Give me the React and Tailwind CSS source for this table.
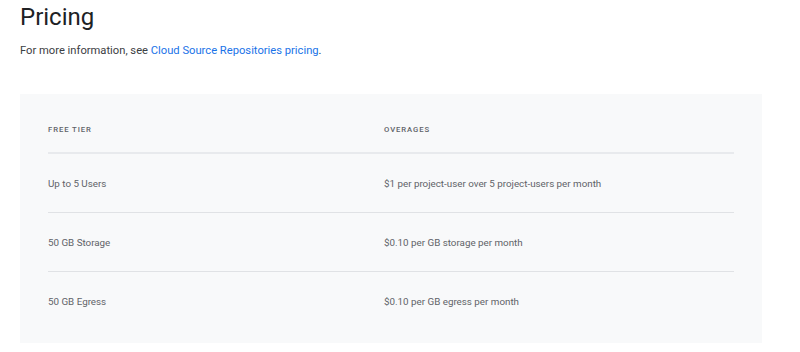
import React from "react";

const rows = [
  ["Up to 5 Users", "$1 per project-user over 5 project-users per month"],
  ["50 GB Storage", "$0.10 per GB storage per month"],
  ["50 GB Egress", "$0.10 per GB egress per month"],
];

export default function App() {
  return (
    <div
      className="w-[800px] h-[352px] bg-white px-5 overflow-hidden"
      style={{ fontFamily: "Roboto, 'Liberation Sans', sans-serif" }}
    >
      <h1 className="text-[24px] leading-[32px] pt-[1px] text-[#202124] font-normal">Pricing</h1>
      <p className="mt-[10px] text-[11.2px] leading-[16px] text-[#3c4043]">
        For more information, see{" "}
        <a href="#" className="text-[#1a73e8]">
          Cloud Source Repositories pricing
        </a>
        .
      </p>

      {/* pricing table */}
      <div className="mt-[35px] w-[742px] bg-[#f8f9fa] px-7 pt-[28px] pb-[12px]">
        <div className="grid grid-cols-[336px_1fr] border-b-2 border-[#e8eaed] pb-[14px] text-[7.7px] font-medium tracking-[0.12em] text-[#5f6368] uppercase leading-[16px]">
          <div>Free Tier</div>
          <div>Overages</div>
        </div>
        {rows.map(([tier, price], idx) => (
          <div
            key={idx}
            className={
              "grid grid-cols-[336px_1fr] h-[59px] pt-[2px] items-center text-[9.8px] text-[#5f6368] " +
              (idx < rows.length - 1 ? "border-b border-[#e0e2e5]" : "")
            }
          >
            <div>{tier}</div>
            <div>{price}</div>
          </div>
        ))}
      </div>
    </div>
  );
}
